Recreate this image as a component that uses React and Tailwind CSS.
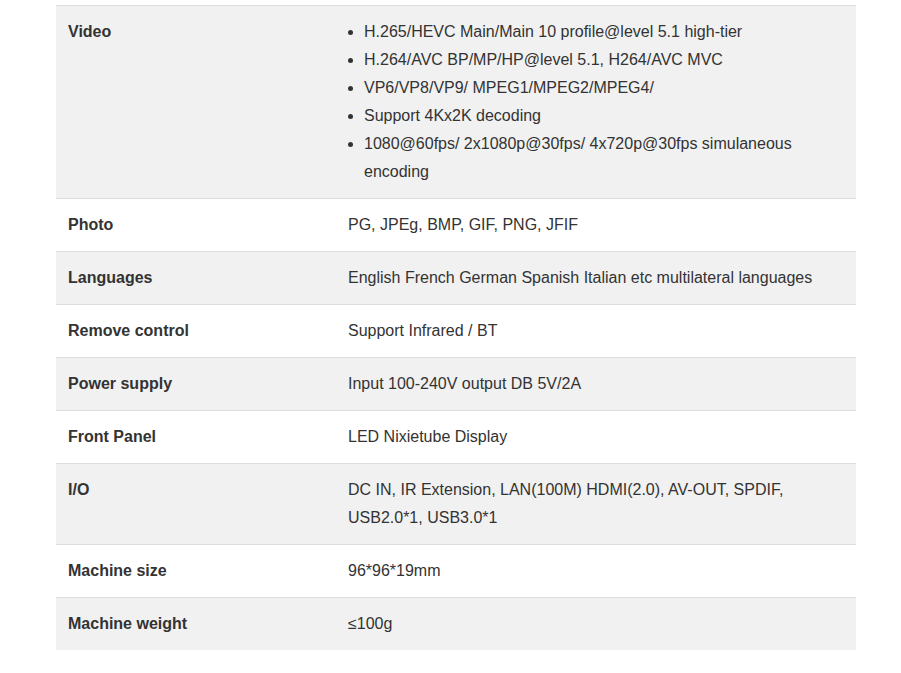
const rows = [
  {
    label: "Video",
    list: [
      "H.265/HEVC Main/Main 10 profile@level 5.1 high-tier",
      "H.264/AVC BP/MP/HP@level 5.1, H264/AVC MVC",
      "VP6/VP8/VP9/ MPEG1/MPEG2/MPEG4/",
      "Support 4Kx2K decoding",
      "1080@60fps/ 2x1080p@30fps/ 4x720p@30fps simulaneous encoding",
    ],
  },
  { label: "Photo", text: "PG, JPEg, BMP, GIF, PNG, JFIF" },
  { label: "Languages", text: "English French German Spanish Italian etc multilateral languages" },
  { label: "Remove control", text: "Support Infrared / BT" },
  { label: "Power supply", text: "Input 100-240V output DB 5V/2A" },
  { label: "Front Panel", text: "LED Nixietube Display" },
  { label: "I/O", text: "DC IN, IR Extension, LAN(100M) HDMI(2.0), AV-OUT, SPDIF, USB2.0*1, USB3.0*1" },
  { label: "Machine size", text: "96*96*19mm" },
  { label: "Machine weight", text: "≤100g" },
];

export default function App() {
  return (
    <div className="bg-white min-h-[673px] pt-[5px] font-['Liberation_Sans',Arial,sans-serif] text-[16px] leading-[28px] text-[#333]">
      <div className="ml-[56px] w-[800px]">
        {rows.map((r, i) => (
          <div
            key={r.label}
            className={`flex border-t border-[#ddd] ${i % 2 === 0 ? "bg-[#f1f1f1]" : "bg-white"}`}
          >
            <div className="w-[280px] shrink-0 px-[12px] py-[12px] font-bold">{r.label}</div>
            <div className="flex-1 px-[12px] py-[12px]">
              {r.list ? (
                <ul className="list-disc pl-[16px]">
                  {r.list.map((t) => (
                    <li key={t}>{t}</li>
                  ))}
                </ul>
              ) : (
                <div>{r.text}</div>
              )}
            </div>
          </div>
        ))}
      </div>
    </div>
  );
}
